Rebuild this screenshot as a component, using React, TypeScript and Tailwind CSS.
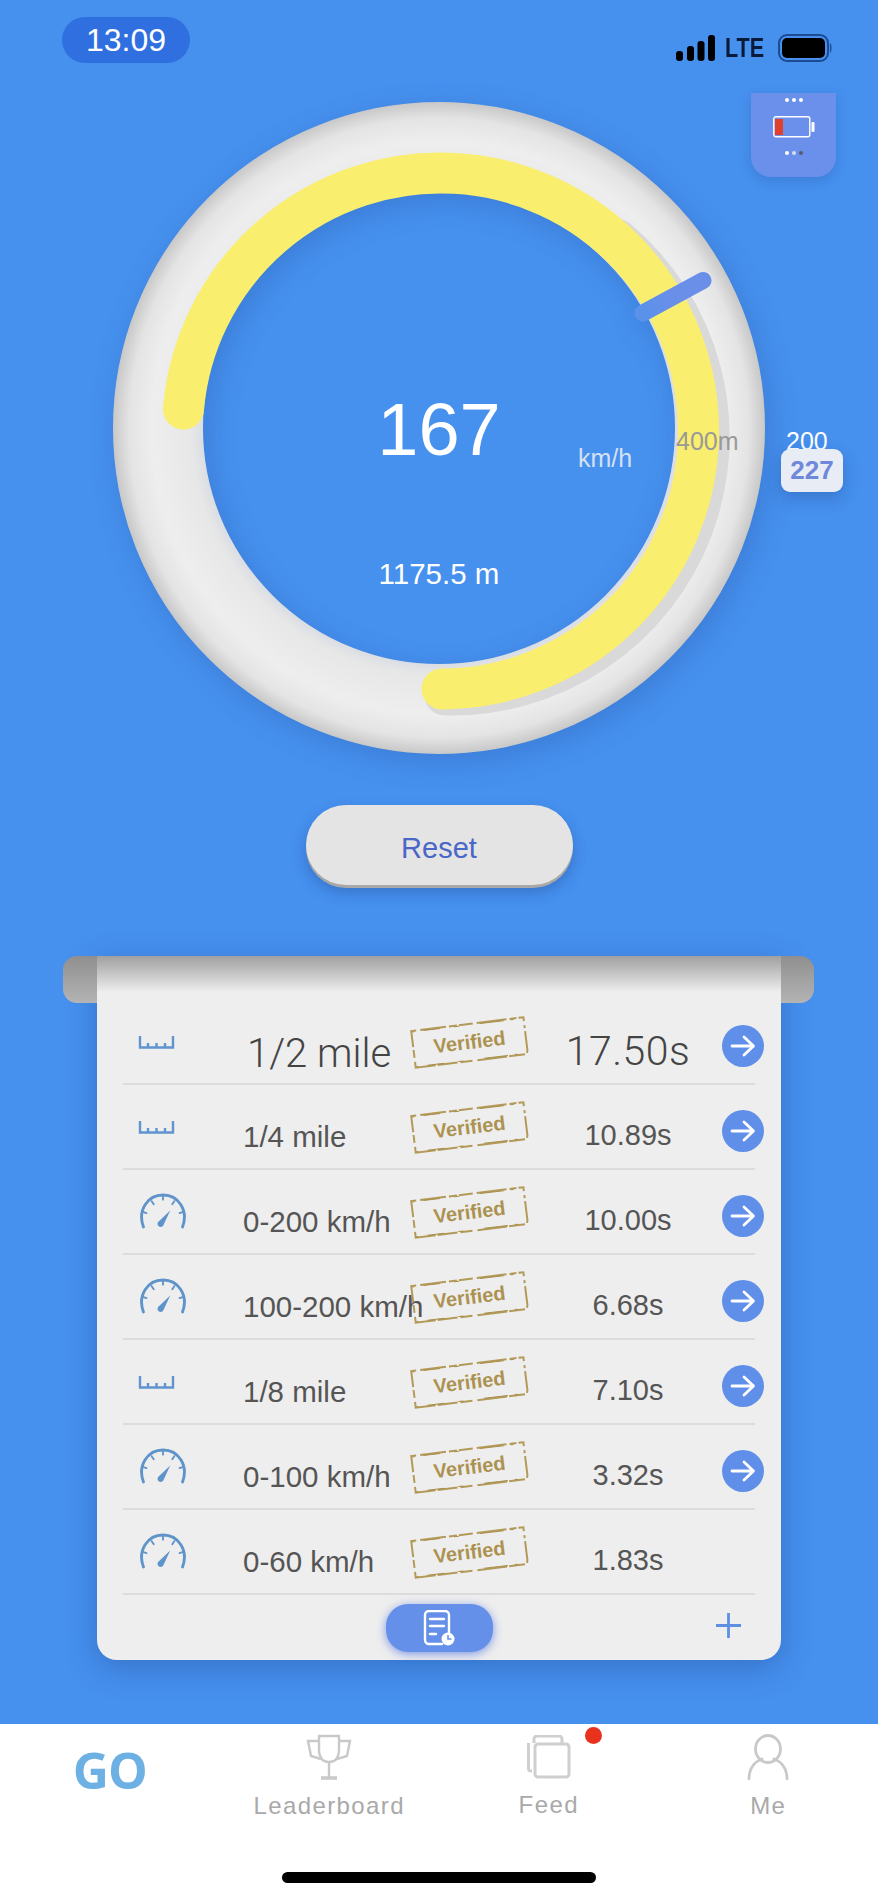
import React from "react";

function Ruler() {
  return (
    <svg width="37" height="13" viewBox="0 0 37 13" fill="none" stroke="#5f94cf" strokeWidth="2.400">
      <path d="M2 0v11.500h33V0M10 7v4.500M18.500 7v4.500M27 7v4.500" />
    </svg>
  );
}

function Speedo() {
  return (
    <svg width="50" height="36" viewBox="0 0 48 35" fill="none" stroke="#5f94cb" strokeWidth="2.800" strokeLinecap="round">
      <path d="M5 33C-1 17 9 2 24 2s25 15 19 31" />
      <path d="M24 3v3.500M13 8l2 3M35 8l-2 3M5 18.500l3 1M43 18.500l-3 1" strokeWidth="1.800" />
      <path d="M20 27.500 31 17l-6.500 14a3 3 0 1 1-4.500-3.500Z" fill="#5f94cb" stroke="none" />
    </svg>
  );
}

function Stamp() {
  return (
    <div className="relative flex h-[42px] w-[117px] -rotate-[7deg] items-center justify-center">
      <svg className="absolute inset-0" width="117" height="42" viewBox="0 0 117 42" fill="none">
        <path
          d="M2 3H115V36L114 40H2V3Z"
          stroke="#b39a58"
          strokeWidth="2"
          strokeDasharray="5 4 26 3 8 2 14 4 30 3 7 2 9 4 3 3 22 3 16 2 30 5 12 3 20 2 26 4 8 3 30"
        />
        <path d="M3 4H114M3 39H113" stroke="#a88f4c" strokeWidth="1" strokeDasharray="2 9 17 14 5 21 24 7 3 16" />
      </svg>
      <span className="text-[20px] leading-none font-bold text-[#ac9250]">Verified</span>
    </div>
  );
}

function Arrow() {
  return (
    <div className="flex h-[42px] w-[42px] items-center justify-center rounded-full bg-[#5f8fe9]">
      <svg width="28" height="24" viewBox="0 0 28 24" fill="none" stroke="#fff" strokeWidth="2.800" strokeLinecap="round" strokeLinejoin="round">
        <path d="M3 12h21M15 3l9.500 9-9.500 9" />
      </svg>
    </div>
  );
}

const rows = [
  { icon: "r", label: "1/2 mile", time: "17.50s", arrow: true, big: true },
  { icon: "r", label: "1/4 mile", time: "10.89s", arrow: true },
  { icon: "s", label: "0-200 km/h", time: "10.00s", arrow: true },
  { icon: "s", label: "100-200 km/h", time: "6.68s", arrow: true },
  { icon: "r", label: "1/8 mile", time: "7.10s", arrow: true },
  { icon: "s", label: "0-100 km/h", time: "3.32s", arrow: true },
  { icon: "s", label: "0-60 km/h", time: "1.83s", arrow: false },
];

function Gauge() {
  return (
    <div className="relative mx-auto h-[652px] w-[652px]">
      <svg className="absolute inset-0 overflow-visible drop-shadow-[5px_8px_14px_rgba(25,60,130,0.22)]" width="652" height="652" viewBox="0 0 652 652" fill="none">
        <defs>
          <radialGradient id="ring" gradientUnits="userSpaceOnUse" cx="326" cy="326" r="326">
            <stop offset="0.72" stopColor="#d8dce3" />
            <stop offset="0.76" stopColor="#e7e7e7" />
            <stop offset="0.88" stopColor="#eeeeee" />
            <stop offset="0.95" stopColor="#e4e4e4" />
            <stop offset="1" stopColor="#c8c8c8" />
          </radialGradient>
          <linearGradient id="hand" gradientUnits="userSpaceOnUse" x1="530" y1="211" x2="590" y2="178">
            <stop offset="0" stopColor="#5a92ea" />
            <stop offset="0.5" stopColor="#6a8fe9" />
            <stop offset="1" stopColor="#6a8fe9" />
          </linearGradient>
        </defs>
        <circle cx="326" cy="326" r="281" stroke="url(#ring)" strokeWidth="90" />
        <path d="M504 137.400A258 258 0 0 1 332 593" stroke="#d9d9d9" strokeWidth="41" strokeLinecap="round" />
        <path d="M70.500 307A258 258 0 1 1 329 587" stroke="#f9ee6e" strokeWidth="41" strokeLinecap="round" />
        <path d="M530 211 590 178.500" stroke="url(#hand)" strokeWidth="17" strokeLinecap="round" />
      </svg>
      <div className="absolute top-[291px] left-0 w-full text-center text-[74px] leading-none text-white">167</div>
      <div className="absolute top-[344px] left-[465px] text-[25px] leading-none text-[#d5e1f3]">km/h</div>
      <div className="absolute top-[457px] left-0 w-full text-center text-[29.500px] leading-none text-white">1175.5 m</div>
      <div className="absolute top-[327px] left-[563px] text-[25px] leading-none text-[#999999]">400m</div>
      <div className="absolute top-[327px] left-[673px] text-[25px] leading-none text-white">200</div>
      <div className="absolute top-[347px] left-[668px] flex h-[43px] w-[62px] items-center justify-center rounded-[9px] bg-[#e8ecf4] text-[26px] font-bold text-[#6f88dc] shadow-[0_6px_16px_rgba(25,60,130,0.3)]">
        227
      </div>
    </div>
  );
}

function Card() {
  return (
    <div className="relative mt-[71px] ml-[97px] h-[704px] w-[684px] rounded-b-[20px] bg-[#eeeeee] shadow-[0_8px_30px_rgba(25,60,130,0.35)]">
      <div className="absolute top-0 -left-[34px] h-[47px] w-[34px] rounded-tl-[14px] rounded-bl-[14px] bg-gradient-to-b from-[#8f8f8f] to-[#b4b4b4]" />
      <div className="absolute top-0 -right-[33px] h-[47px] w-[33px] rounded-tr-[14px] rounded-br-[14px] bg-gradient-to-b from-[#8f8f8f] to-[#b4b4b4]" />
      <div className="absolute inset-x-0 top-0 h-[36px] bg-gradient-to-b from-[#a0a0a0] to-[#eeeeee]" />
      <div className="relative ml-[26px] w-[632px] pt-[44px]">
        {rows.map((r) => (
          <div key={r.label} className="grid h-[85px] grid-cols-[119px_169px_117px_200px_42px] items-start border-b-2 border-[#dcdcdc]">
            <div className={r.icon === "r" ? "mt-[36px] ml-[15px]" : "mt-[23px] ml-[15px]"}>
              {r.icon === "r" ? <Ruler /> : <Speedo />}
            </div>
            <div
              className={
                r.big
                  ? "mt-[34px] ml-[5px] font-['Roboto',sans-serif] text-[40px] leading-none font-light whitespace-nowrap text-[#444444]"
                  : "mt-[37px] ml-[1px] text-[29.500px] leading-none whitespace-nowrap text-[#555555]"
              }
            >
              {r.label}
            </div>
            <div className="relative mt-[21px]">
              <Stamp />
            </div>
            <div
              className={
                r.big
                  ? "mt-[31px] text-center font-['Roboto',sans-serif] text-[41px] leading-none font-light tracking-[0.5px] text-[#444444]"
                  : "mt-[36px] text-center text-[29px] leading-none text-[#555555]"
              }
            >
              {r.time}
            </div>
            {r.arrow ? (
              <div className="mt-[25px] -ml-[6px]">
                <Arrow />
              </div>
            ) : null}
          </div>
        ))}
        <div className="relative flex h-[66px] items-start justify-center pt-[9px]">
          <div className="flex h-[48px] w-[107px] items-center justify-center rounded-[22px] bg-[#6490ea] shadow-[0_2px_10px_rgba(50,90,220,0.6)]">
            <svg width="32" height="36" viewBox="0 0 32 36" fill="none" stroke="#fff" strokeWidth="2.400" strokeLinecap="round">
              <path d="M19 34H6a4 4 0 0 1-4-4V5a4 4 0 0 1 4-4h16a4 4 0 0 1 4 4v18" />
              <path d="M7 9h14M7 16h14M7 24h6" />
              <circle cx="25" cy="29" r="6.500" fill="#fff" stroke="none" />
              <path d="M25 25.500V29h3" stroke="#6490ea" strokeWidth="1.500" />
            </svg>
          </div>
          <svg className="absolute top-[18px] left-[593px]" width="25" height="25" viewBox="0 0 25 25" fill="none" stroke="#5f8fe3" strokeWidth="2.800">
            <path d="M12.500 0v25M0 12.500h25" />
          </svg>
        </div>
      </div>
    </div>
  );
}

function TabBar() {
  const label = "text-[24px] leading-none tracking-[1.4px] text-[#a9a9a9]";
  return (
    <div className="relative mt-auto h-[176px] bg-white">
      <div className="grid grid-cols-4">
        <div className="flex justify-center pt-[17px]">
          <span className="font-['Open_Sans',sans-serif] text-[50px] leading-[58px] font-bold tracking-[-1px] text-[#6cb0e4]">GO</span>
        </div>
        <div className="flex flex-col items-center pt-[10px]">
          <svg width="46" height="46" viewBox="0 0 46 46" fill="none" stroke="#c9c9c9" strokeWidth="2.400">
            <path d="M13 2h20v13c0 9-4 13-10 13s-10-4-10-13V2Z" />
            <path d="M13 7H2l3 15 10 3M33 7h11l-3 15-10 3M23 28v15" />
            <path d="M15 44h16" strokeWidth="3.500" />
          </svg>
          <span className={`mt-[14px] ${label}`}>Leaderboard</span>
        </div>
        <div className="relative flex flex-col items-center pt-[11px]">
          <svg width="44" height="44" viewBox="0 0 44 44" fill="none" stroke="#cfcfcf" strokeWidth="3">
            <path d="M7 8V4a3 3 0 0 1 3-3h22a3 3 0 0 1 3 3v4M5 36H4a2.500 2.500 0 0 1-2.500-2.500V8" />
            <rect x="8" y="9" width="34" height="33" rx="3" />
          </svg>
          <span className={`mt-[14px] ${label}`}>Feed</span>
          <div className="absolute top-[3px] left-[146px] h-[17px] w-[17px] rounded-full bg-[#e8321e]" />
        </div>
        <div className="flex flex-col items-center pt-[10px]">
          <svg width="42" height="46" viewBox="0 0 42 46" fill="none" stroke="#c9c9c9" strokeWidth="2.800">
            <ellipse cx="21" cy="15" rx="12.500" ry="13.500" />
            <path d="M2 45c0-12 7-18 13-20M40 45c0-12-7-18-13-20" strokeLinecap="round" />
          </svg>
          <span className={`mt-[14px] ${label}`}>Me</span>
        </div>
      </div>
      <div className="absolute bottom-[17px] left-[282px] h-[11px] w-[314px] rounded-full bg-black" />
    </div>
  );
}

export default function App() {
  return (
    <div className="relative flex h-[1900px] w-[878px] flex-col overflow-hidden bg-[#4690ee] font-['Liberation_Sans',sans-serif]">
      <div className="flex h-[102px] items-start justify-between pt-[17px] pr-[46px] pl-[62px]">
        <div className="flex h-[46px] w-[128px] items-center justify-center rounded-[23px] bg-[#2f6fe0] text-[32px] leading-none text-white">13:09</div>
        <div className="flex items-center pt-[17px]">
          <svg width="39" height="26" viewBox="0 0 39 26" fill="#000">
            <rect x="0" y="16" width="7" height="10" rx="3" />
            <rect x="11" y="11" width="7" height="15" rx="3" />
            <rect x="21.500" y="6" width="7" height="20" rx="3" />
            <rect x="32" y="0" width="7" height="26" rx="3" />
          </svg>
          <span className="ml-[10px] w-[48px] origin-left scale-x-[0.8] text-[27px] leading-none font-bold text-[#0a1a3a]">LTE</span>
          <svg className="ml-[5px]" width="54" height="28" viewBox="0 0 54 28">
            <rect x="1" y="1" width="49" height="26" rx="8" fill="none" stroke="#1d4a92" strokeWidth="2" />
            <rect x="4" y="4" width="43" height="20" rx="5" fill="#000" />
            <path d="M52 9c2 1 2 9 0 10Z" fill="#1d4a92" />
          </svg>
        </div>
      </div>

      <div className="absolute top-[93px] left-[751px] z-10 flex h-[84px] w-[85px] flex-col items-center justify-between rounded-b-[20px] bg-[#6a90ec] pt-[5px] pb-[22px] shadow-[0_4px_12px_rgba(25,60,130,0.2)]">
        <div className="flex gap-[3px]">
          <span className="h-[4px] w-[4px] rounded-full bg-white" />
          <span className="h-[4px] w-[4px] rounded-full bg-white" />
          <span className="h-[4px] w-[4px] rounded-full bg-white" />
        </div>
        <svg width="42" height="22" viewBox="0 0 42 22" fill="none">
          <rect x="0.800" y="0.800" width="36" height="20" rx="2" stroke="#fff" strokeWidth="1.400" />
          <rect x="2" y="3" width="8" height="16" fill="#e0402c" />
          <rect x="38.500" y="6" width="3" height="10" rx="1" fill="#fff" />
        </svg>
        <div className="flex gap-[3px]">
          <span className="h-[4px] w-[4px] rounded-full bg-white" />
          <span className="h-[4px] w-[4px] rounded-full bg-[#d8dde8]" />
          <span className="h-[4px] w-[4px] rounded-full bg-[#555b70]" />
        </div>
      </div>

      <Gauge />

      <div className="mx-auto mt-[51px] flex h-[80px] w-[267px] items-center justify-center rounded-[40px] bg-[#e4e4e4] pt-[7px] text-[29px] leading-none text-[#4a66c8] shadow-[0_3px_0_#a8a8a8,0_7px_14px_rgba(25,60,130,0.35)]">
        Reset
      </div>

      <Card />
      <TabBar />
    </div>
  );
}
